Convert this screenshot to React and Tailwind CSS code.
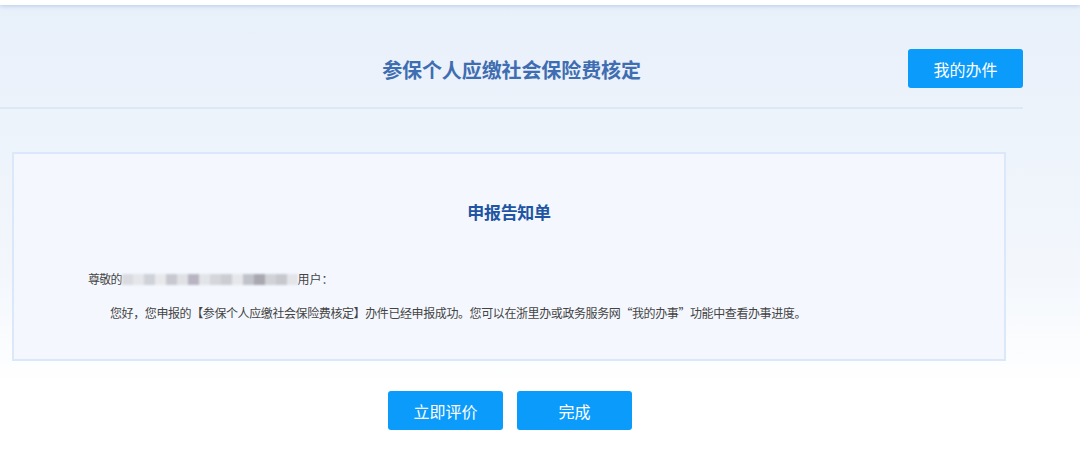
export default function App() {
  const mosaic = ["#d9dbe0", "#e4e6ea", "#cfd2d8", "#e8e9ec", "#c8c9d0", "#dfe1e5", "#b9b4c2", "#e2e4e8", "#d4d6db", "#cccdd3", "#e6e7ea", "#c1c3ca", "#a9a7b0", "#d0d2d7", "#c6c8ce", "#e3e5e9"];
  return (
    <div
      className="w-[1080px] h-[453px] overflow-hidden bg-white"
      style={{ fontFamily: '"Noto Sans CJK SC", "Noto Sans", sans-serif' }}
    >
      <div className="h-[5px] bg-white relative z-10 shadow-[0_1px_4px_rgba(120,160,210,0.45)]" />
      <div className="h-[448px] bg-gradient-to-b from-[#e8f0fa] via-[#f3f7fc] via-60% to-white to-85%">
        <div className="w-[1023px] h-[104px] border-b-2 border-[#dde8f4] pt-[43px]">
          <div className="h-[39px] grid grid-cols-[1fr_auto_1fr] items-center">
            <div />
            <h1 className="text-[20px] leading-[39px] font-bold text-[#3f6db1] mt-[2px] tracking-[-0.1px]">
              参保个人应缴社会保险费核定
            </h1>
            <div className="flex justify-end">
              <button className="w-[115px] h-[39px] rounded-[3px] bg-[#0a9bfb] text-white text-[16px]">
                我的办件
              </button>
            </div>
          </div>
        </div>

        <div className="ml-[12px] mt-[43px] w-[994px] h-[209px] border-2 border-[#dbe8fa] bg-[#f4f8fe]">
          <h2 className="mt-[46px] text-center text-[17px] leading-[24px] font-bold text-[#1f55a3] tracking-[-0.3px]">
            申报告知单
          </h2>
          <div className="mt-[46px] ml-[74px] flex items-center text-[12px] leading-[18px] text-[#444]">
            <span className="tracking-[-0.8px]">尊敬的</span>
            <span className="flex h-[11px] w-[176px] blur-[1px]">
              {mosaic.map((c, i) => (
                <span key={i} className="flex-1 h-full" style={{ backgroundColor: c }} />
              ))}
            </span>
            <span>用户：</span>
          </div>
          <p className="mt-[16px] ml-[96px] text-[12px] leading-[18px] text-[#444] tracking-[-0.4px]">
            您好，您申报的【参保个人应缴社会保险费核定】办件已经申报成功。您可以在浙里办或政务服务网“我的办事”功能中查看办事进度。
          </p>
        </div>

        <div className="mt-[30px] w-[1020px] flex justify-center gap-[14px]">
          <button className="w-[115px] h-[39px] rounded-[3px] bg-[#0a9bfb] text-white text-[16px]">
            立即评价
          </button>
          <button className="w-[115px] h-[39px] rounded-[3px] bg-[#0a9bfb] text-white text-[16px]">
            完成
          </button>
        </div>
      </div>
    </div>
  );
}
